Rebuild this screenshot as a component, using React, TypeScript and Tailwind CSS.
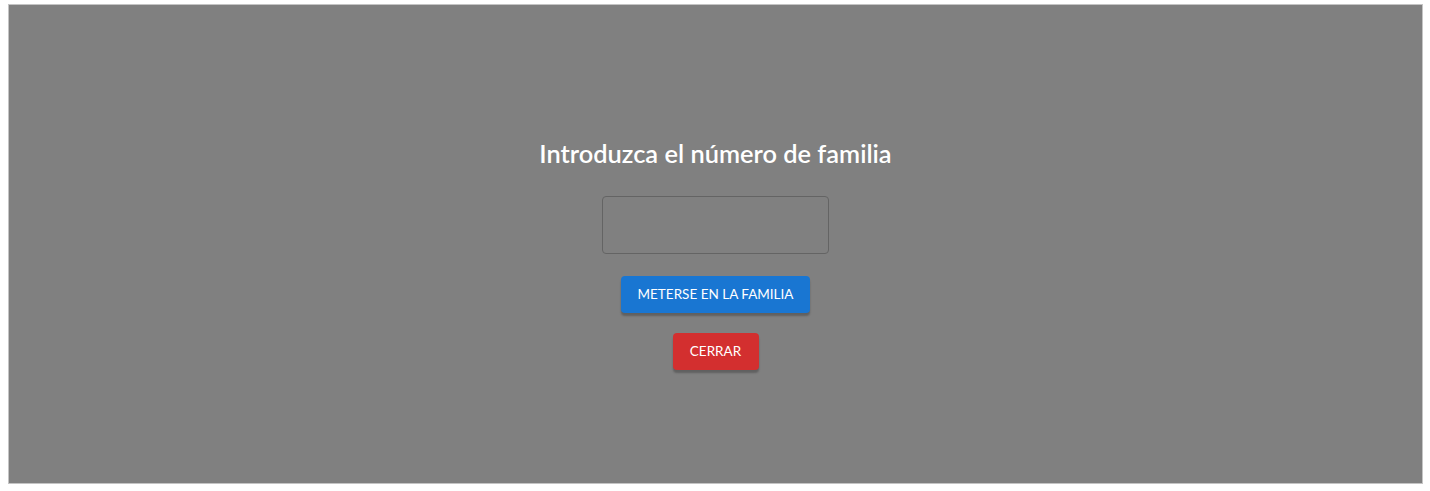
import { useState } from "react";

export default function App() {
  const [familia, setFamilia] = useState("");

  return (
    <div className="min-h-screen bg-white pl-2 pt-1" style={{ fontFamily: "Lato, 'Noto Sans', sans-serif" }}>
      <div className="w-[1415px] h-[480px] bg-[#808080] border border-[#c4c4c4] flex flex-col items-center pt-[132px]">
        <h2 className="text-[25.4px] leading-8 font-semibold text-white">Introduzca el número de familia</h2>
        <input
          value={familia}
          onChange={(e) => setFamilia(e.target.value)}
          className="mt-[27px] w-[227px] h-[58px] rounded border border-[#646464] bg-transparent px-3 text-white outline-none"
        />
        <button className="mt-[22px] w-[189px] h-[37px] rounded bg-[#1976d2] text-white text-[13.5px] uppercase shadow-[0_3px_2px_rgba(0,0,0,0.25)]">
          Meterse en la familia
        </button>
        <button className="mt-[20px] w-[86px] h-[37px] rounded bg-[#d32f2f] text-white text-[13.5px] uppercase shadow-[0_3px_2px_rgba(0,0,0,0.25)]">
          Cerrar
        </button>
      </div>
    </div>
  );
}
